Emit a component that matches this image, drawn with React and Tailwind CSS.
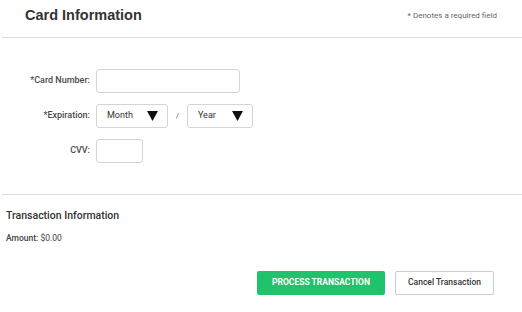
import React from "react";

function Caret() {
  return (
    <svg width="11" height="10" viewBox="0 0 11 10" className="shrink-0">
      <path d="M0 0 H11 L5.5 10 Z" fill="#111" />
    </svg>
  );
}

function Select({ label, width }) {
  return (
    <div
      className={`flex items-center justify-between h-[24px] border border-[#d4d4d4] rounded-[3px] bg-white pl-[10px] pr-[9px] ${width}`}
    >
      <span className="text-[9px] text-[#333]">{label}</span>
      <Caret />
    </div>
  );
}

export default function App() {
  return (
    <div className="w-[522px] h-[312px] bg-white font-['Roboto','Liberation_Sans',Arial,sans-serif] overflow-hidden">
      <div className="flex justify-between items-start h-[37px] pl-[25px] pr-[25px] pt-[6px]">
        <h1 className="text-[14.5px] leading-[18px] font-bold text-[#333] font-['Liberation_Sans',Arial,sans-serif]">
          Card Information
        </h1>
        <span className="text-[8px] text-[#666] mt-[4px]">* Denotes a required field</span>
      </div>
      <div className="ml-[2px] border-t border-[#dcdcdc]" />

      <div className="pt-[31px] flex flex-col gap-[11px]">
        <div className="flex items-center">
          <div className="w-[90px] text-right text-[9px] font-medium text-[#4a4a4a]">*Card Number:</div>
          <div className="ml-[6px] w-[144px] h-[24px] border border-[#d4d4d4] rounded-[3px]" />
        </div>
        <div className="flex items-center">
          <div className="w-[90px] text-right text-[9px] font-medium text-[#4a4a4a]">*Expiration:</div>
          <div className="ml-[6px] flex items-center">
            <Select label="Month" width="w-[72px]" />
            <span className="w-[19px] text-center text-[8px] text-[#666]">/</span>
            <Select label="Year" width="w-[66px]" />
          </div>
        </div>
        <div className="flex items-center">
          <div className="w-[90px] text-right text-[9px] font-medium text-[#4a4a4a]">CVV:</div>
          <div className="ml-[6px] w-[47px] h-[24px] border border-[#d4d4d4] rounded-[3px]" />
        </div>
      </div>

      <div className="mt-[31px] ml-[2px] border-t border-[#dcdcdc]" />

      <div className="pl-[6px] pt-[14px]">
        <h2 className="text-[10.5px] leading-[14px] font-medium text-[#333]">Transaction Information</h2>
        <p className="mt-[9px] text-[8.5px] text-[#444]">
          <span className="font-medium">Amount:</span> $0.00
        </p>
      </div>

      <div className="flex justify-end gap-[10px] pr-[28px] mt-[26px]">
        <button className="h-[24px] w-[128px] rounded-[2px] bg-[#1ec36b] text-white text-[8.5px] font-bold uppercase">
          Process Transaction
        </button>
        <button className="h-[24px] w-[99px] rounded-[2px] border border-[#ccc] bg-white text-[#333] text-[8.5px] font-medium">
          Cancel Transaction
        </button>
      </div>
    </div>
  );
}
